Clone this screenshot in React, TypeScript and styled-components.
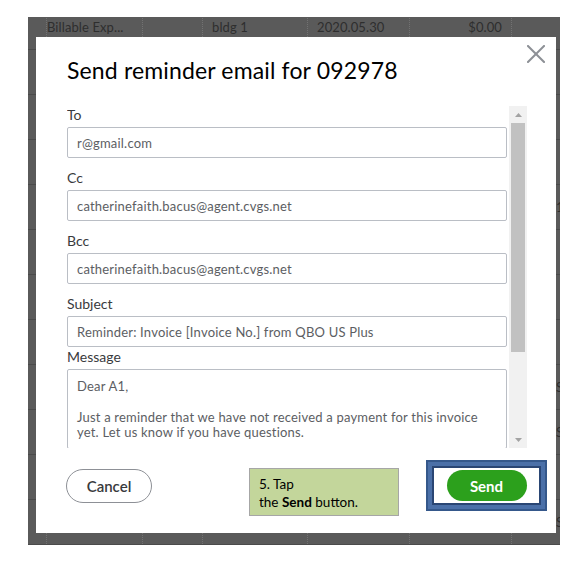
import styled, { createGlobalStyle } from 'styled-components';

const GlobalStyle = createGlobalStyle`
  html, body {
    margin: 0;
    padding: 0;
    background: #FFFFFF;
  }
  body {
    font-family: 'Lato', 'Open Sans', sans-serif;
  }
`;

const Page = styled.div`
  width: 570px;
  height: 562px;
  padding: 17px 10px 0 28px;
  box-sizing: border-box;
`;

const Backdrop = styled.div`
  position: relative;
  width: 532px;
  height: 528px;
  background: #5a5a5a;
  overflow: hidden;
`;

const Table = styled.div`
  margin-top: -12px;
`;

const TableRow = styled.div`
  display: grid;
  grid-template-columns: 10px 105px 60px 105px 102px 102px 48px;
  height: 45px;
  border-bottom: 1px solid #4a4a4a;
  box-sizing: border-box;
`;

const Cell = styled.div<{ $align?: 'left' | 'right' }>`
  display: flex;
  align-items: center;
  justify-content: ${p => (p.$align === 'right' ? 'flex-end' : 'flex-start')};
  padding: 0 9px;
  border-right: 1px dotted #727272;
  font-size: 13px;
  letter-spacing: 0.1px;
  color: #2e2e2e;
  white-space: nowrap;
  overflow: hidden;
`;

const EdgeCell = styled(Cell)`
  padding-left: 44px;
  border-right: none;
`;

const Dialog = styled.div`
  position: absolute;
  left: 8px;
  top: 20px;
  width: 520px;
  height: 496px;
  background: #FFFFFF;
  padding: 18px 0 0 31px;
  box-sizing: border-box;
`;

const CloseButton = styled.button`
  position: absolute;
  top: 8px;
  right: 11px;
  width: 18px;
  height: 18px;
  padding: 0;
  border: none;
  background: none;
  display: flex;

  svg {
    width: 18px;
    height: 18px;
    stroke: #8d9096;
    stroke-width: 2;
  }
`;

const Title = styled.h2`
  margin: 0 0 21px;
  font-size: 23px;
  line-height: 30px;
  letter-spacing: 0.15px;
  font-weight: 400;
  color: #000000;
`;

const Body = styled.div`
  display: flex;
  gap: 2px;
  width: 460px;
  height: 342px;
`;

const Form = styled.div`
  width: 440px;
  height: 342px;
  overflow: hidden;
  display: flex;
  flex-direction: column;
`;

const Field = styled.div<{ $gap: number }>`
  margin-top: ${p => p.$gap}px;
  display: flex;
  flex-direction: column;
`;

const Label = styled.label`
  font-size: 14px;
  line-height: 17px;
  margin-bottom: 4px;
  color: #393a3d;
`;

const Input = styled.input`
  height: 31px;
  box-sizing: border-box;
  border: 1px solid #babec5;
  border-radius: 2px;
  padding: 0 9px;
  font-family: 'Lato', sans-serif;
  font-size: 13px;
  letter-spacing: 0.2px;
  color: #5c5e63;
  outline: none;
`;

const MessageBox = styled.div`
  height: 80px;
  box-sizing: border-box;
  border: 1px solid #babec5;
  border-radius: 2px;
  padding: 9px 9px 0;
  font-size: 13px;
  letter-spacing: 0.2px;
  line-height: 15.3px;
  color: #5c5e63;
  white-space: pre-line;
`;

const ScrollBar = styled.div`
  width: 18px;
  height: 342px;
  background: #f1f1f1;
  display: flex;
  flex-direction: column;
  align-items: center;
`;

const ArrowBtn = styled.div`
  height: 17px;
  width: 100%;
  display: flex;
  align-items: center;
  justify-content: center;

  svg {
    width: 7px;
    height: 4px;
    fill: #a3a3a3;
  }
`;

const Thumb = styled.div`
  width: 14px;
  height: 229px;
  background: #c1c1c1;
`;

const Spacer = styled.div`
  flex: 1;
`;

const Footer = styled.div`
  display: flex;
  align-items: flex-start;
  margin-top: 12px;
  margin-left: -1px;
`;

const CancelButton = styled.button`
  margin-top: 9px;
  width: 86px;
  height: 34px;
  border: 1px solid #8d9096;
  border-radius: 17px;
  background: #FFFFFF;
  font-family: 'Lato', sans-serif;
  font-size: 15px;
  font-weight: 600;
  color: #393a3d;
`;

const Callout = styled.div`
  margin: 8px 0 0 97px;
  width: 150px;
  height: 48px;
  box-sizing: border-box;
  background: #c3d69b;
  border: 1px solid #a6a6a6;
  padding: 6px 9px;
  font-size: 13.5px;
  line-height: 18px;
  color: #000000;

  b {
    font-weight: 700;
  }
`;

const Highlight = styled.div`
  margin-left: 27px;
  width: 121px;
  height: 51px;
  box-sizing: border-box;
  border: 2px solid #35588b;
  background: #4b70a8;
  padding: 4px;
`;

const HighlightInner = styled.div`
  height: 100%;
  box-sizing: border-box;
  border: 2px solid #2a4674;
  background: #FFFFFF;
  display: flex;
  align-items: center;
  justify-content: center;
`;

const SendButton = styled.button`
  width: 80px;
  height: 31px;
  border: none;
  border-radius: 16px;
  background: #2ca01c;
  color: #FFFFFF;
  font-family: 'Lato', sans-serif;
  font-size: 15px;
  font-weight: 700;
`;

const rows: string[][] = [
  ['', 'Billable Exp...', '', 'bldg 1', '2020.05.30', '$0.00', ''],
  ['', '', '', '', '', '', ''],
  ['', '', '', '', '', '', ''],
  ['', '', '', '', '', '', ''],
  ['', '', '', '', '', '', '1'],
  ['', '', '', '', '', '', ''],
  ['', '', '', '', '', '', ''],
  ['', '', '', '', '', '', ''],
  ['', '', '', '', '', '', 'S'],
  ['', '', '', '', '', '', 'S'],
  ['', '', '', '', '', '', ''],
  ['', '', '', '', '', '', 'S'],
];

const fields = [
  { label: 'To', value: 'r@gmail.com', gap: 0 },
  { label: 'Cc', value: 'catherinefaith.bacus@agent.cvgs.net', gap: 11 },
  { label: 'Bcc', value: 'catherinefaith.bacus@agent.cvgs.net', gap: 11 },
  { label: 'Subject', value: 'Reminder: Invoice [Invoice No.] from QBO US Plus', gap: 11 },
];

export default function App() {
  return (
    <>
      <GlobalStyle />
      <Page>
        <Backdrop>
          <Table>
            {rows.map((r, i) => (
              <TableRow key={i}>
                {r.slice(0, 6).map((c, j) => (
                  <Cell key={j} $align={j === 5 ? 'right' : 'left'}>{c}</Cell>
                ))}
                <EdgeCell>{r[6]}</EdgeCell>
              </TableRow>
            ))}
          </Table>

          <Dialog>
            <CloseButton aria-label="Close">
              <svg viewBox="0 0 18 18" strokeLinecap="square">
                <line x1="1" y1="1" x2="17" y2="17" />
                <line x1="17" y1="1" x2="1" y2="17" />
              </svg>
            </CloseButton>
            <Title>Send reminder email for 092978</Title>
            <Body>
              <Form>
                {fields.map(f => (
                  <Field key={f.label} $gap={f.gap}>
                    <Label>{f.label}</Label>
                    <Input readOnly value={f.value} />
                  </Field>
                ))}
                <Field $gap={1}>
                  <Label>Message</Label>
                  <MessageBox>
                    {'Dear A1,\n\nJust a reminder that we have not received a payment for this invoice\nyet. Let us know if you have questions.'}
                  </MessageBox>
                </Field>
              </Form>
              <ScrollBar>
                <ArrowBtn>
                  <svg viewBox="0 0 7 4"><polygon points="3.5,0 7,4 0,4" /></svg>
                </ArrowBtn>
                <Thumb />
                <Spacer />
                <ArrowBtn>
                  <svg viewBox="0 0 7 4"><polygon points="0,0 7,0 3.5,4" /></svg>
                </ArrowBtn>
              </ScrollBar>
            </Body>
            <Footer>
              <CancelButton>Cancel</CancelButton>
              <Callout>
                5. Tap
                <br />
                the <b>Send</b> button.
              </Callout>
              <Highlight>
                <HighlightInner>
                  <SendButton>Send</SendButton>
                </HighlightInner>
              </Highlight>
            </Footer>
          </Dialog>
        </Backdrop>
      </Page>
    </>
  );
}
